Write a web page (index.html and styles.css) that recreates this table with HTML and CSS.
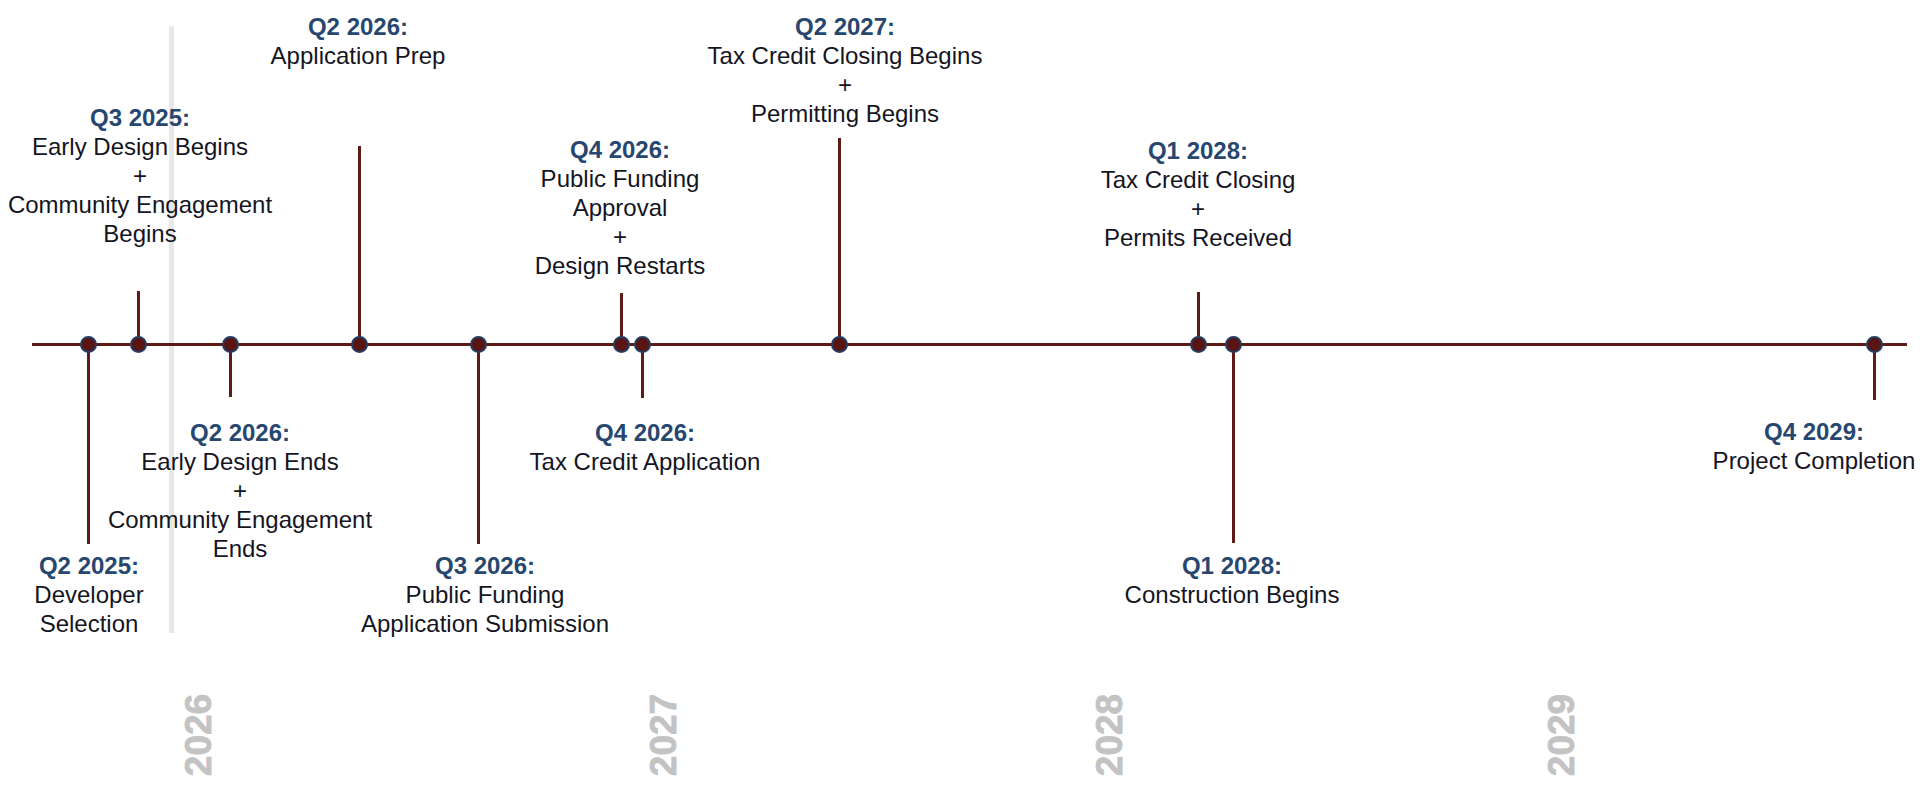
FILE: index.html
```html
<!DOCTYPE html>
<html lang="en">
<head>
<meta charset="utf-8">
<title>Project Timeline</title>
<link rel="stylesheet" href="styles.css">
</head>
<body>
<main class="chart">
  <div class="year-rule"></div>
  <div class="axis"></div>

  <div class="stem down" style="--x:88px; --h:199px"></div>
  <div class="stem up" style="--x:138px; --h:54px"></div>
  <div class="stem down" style="--x:230px; --h:52px"></div>
  <div class="stem up" style="--x:359px; --h:199px"></div>
  <div class="stem down" style="--x:478px; --h:199px"></div>
  <div class="stem up" style="--x:621px; --h:52px"></div>
  <div class="stem down" style="--x:642px; --h:53px"></div>
  <div class="stem up" style="--x:839px; --h:207px"></div>
  <div class="stem up" style="--x:1198px; --h:53px"></div>
  <div class="stem down" style="--x:1233px; --h:198px"></div>
  <div class="stem down" style="--x:1874px; --h:55px"></div>

  <div class="dot" style="--x:88px"></div>
  <div class="dot" style="--x:138px"></div>
  <div class="dot" style="--x:230px"></div>
  <div class="dot" style="--x:359px"></div>
  <div class="dot" style="--x:478px"></div>
  <div class="dot" style="--x:621px"></div>
  <div class="dot" style="--x:642px"></div>
  <div class="dot" style="--x:839px"></div>
  <div class="dot" style="--x:1198px"></div>
  <div class="dot" style="--x:1233px"></div>
  <div class="dot" style="--x:1874px"></div>

  <div class="label" style="--x:89px; --y:551px">
    <div class="when">Q2 2025:</div>
    <div>Developer</div>
    <div>Selection</div>
  </div>
  <div class="label" style="--x:140px; --y:103px">
    <div class="when">Q3 2025:</div>
    <div>Early Design Begins</div>
    <div>+</div>
    <div>Community Engagement</div>
    <div>Begins</div>
  </div>
  <div class="label" style="--x:240px; --y:418px">
    <div class="when">Q2 2026:</div>
    <div>Early Design Ends</div>
    <div>+</div>
    <div>Community Engagement</div>
    <div>Ends</div>
  </div>
  <div class="label" style="--x:358px; --y:12px">
    <div class="when">Q2 2026:</div>
    <div>Application Prep</div>
  </div>
  <div class="label" style="--x:485px; --y:551px">
    <div class="when">Q3 2026:</div>
    <div>Public Funding</div>
    <div>Application Submission</div>
  </div>
  <div class="label" style="--x:620px; --y:135px">
    <div class="when">Q4 2026:</div>
    <div>Public Funding</div>
    <div>Approval</div>
    <div>+</div>
    <div>Design Restarts</div>
  </div>
  <div class="label" style="--x:645px; --y:418px">
    <div class="when">Q4 2026:</div>
    <div>Tax Credit Application</div>
  </div>
  <div class="label" style="--x:845px; --y:12px">
    <div class="when">Q2 2027:</div>
    <div>Tax Credit Closing Begins</div>
    <div>+</div>
    <div>Permitting Begins</div>
  </div>
  <div class="label" style="--x:1198px; --y:136px">
    <div class="when">Q1 2028:</div>
    <div>Tax Credit Closing</div>
    <div>+</div>
    <div>Permits Received</div>
  </div>
  <div class="label" style="--x:1232px; --y:551px">
    <div class="when">Q1 2028:</div>
    <div>Construction Begins</div>
  </div>
  <div class="label" style="--x:1814px; --y:417px">
    <div class="when">Q4 2029:</div>
    <div>Project Completion</div>
  </div>

  <div class="year" style="--x:198px">2026</div>
  <div class="year" style="--x:663px">2027</div>
  <div class="year" style="--x:1109px">2028</div>
  <div class="year" style="--x:1561px">2029</div>
</main>
</body>
</html>
```
FILE: styles.css
```css
html, body {
  margin: 0;
  padding: 0;
  background: #ffffff;
}

.chart {
  position: relative;
  width: 1920px;
  height: 792px;
  overflow: hidden;
  font-family: "Liberation Sans", Arial, sans-serif;
  font-size: 24px;
  line-height: 29px;
  color: #15151f;
}

.year-rule {
  position: absolute;
  left: 169px;
  top: 26px;
  width: 5px;
  height: 607px;
  background: #e8e8e8;
}

.axis {
  position: absolute;
  left: 32px;
  top: 343px;
  width: 1875px;
  height: 3px;
  background: #5e1a15;
}

.stem {
  position: absolute;
  left: calc(var(--x) - 1.5px);
  width: 3px;
  height: var(--h);
  background: #5e1a15;
}

.stem.up {
  top: calc(345px - var(--h));
}

.stem.down {
  top: 345px;
}

.dot {
  position: absolute;
  left: calc(var(--x) - 8.5px);
  top: 336px;
  width: 17px;
  height: 17px;
  box-sizing: border-box;
  border-radius: 50%;
  background: #5a1411;
  border: 2.5px solid #233d62;
}

.label {
  position: absolute;
  left: var(--x);
  top: var(--y);
  transform: translateX(-50%);
  text-align: center;
  white-space: nowrap;
}

.when {
  font-weight: 700;
  color: #27476f;
}

.year {
  position: absolute;
  left: var(--x);
  top: 735px;
  transform: translate(-50%, -50%) rotate(-90deg);
  font-size: 37px;
  line-height: 37px;
  font-weight: 700;
  color: #c3c3c3;
  -webkit-text-stroke: 0.8px #c3c3c3;
  white-space: nowrap;
}
```
